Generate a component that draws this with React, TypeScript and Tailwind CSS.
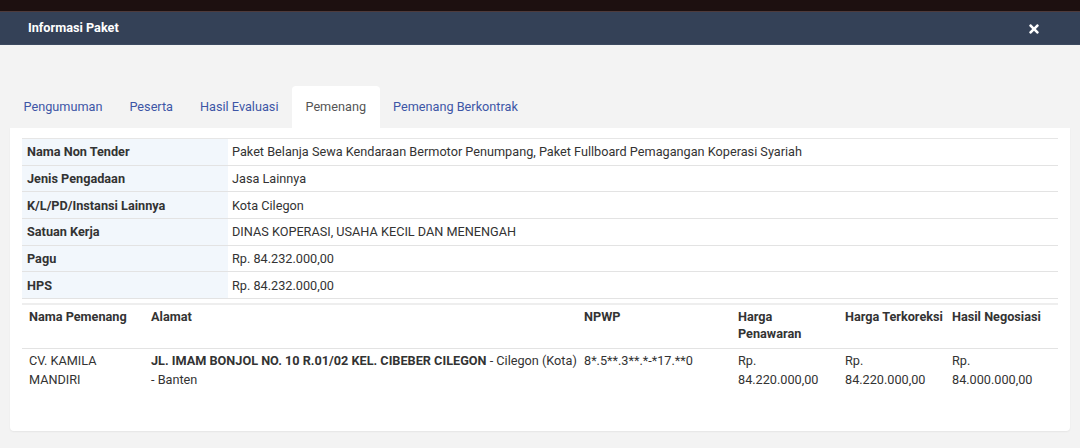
import React from "react";
import { FaTimes } from "react-icons/fa";

const info: [string, string][] = [
  ["Nama Non Tender", "Paket Belanja Sewa Kendaraan Bermotor Penumpang, Paket Fullboard Pemagangan Koperasi Syariah"],
  ["Jenis Pengadaan", "Jasa Lainnya"],
  ["K/L/PD/Instansi Lainnya", "Kota Cilegon"],
  ["Satuan Kerja", "DINAS KOPERASI, USAHA KECIL DAN MENENGAH"],
  ["Pagu", "Rp. 84.232.000,00"],
  ["HPS", "Rp. 84.232.000,00"],
];

const tabs = ["Pengumuman", "Peserta", "Hasil Evaluasi", "Pemenang", "Pemenang Berkontrak"];

export default function App() {
  return (
    <div
      className="w-[1080px] h-[448px] overflow-hidden bg-[#f3f3f3] text-[12.7px] text-[#333]"
      style={{ fontFamily: "Roboto, 'Liberation Sans', sans-serif" }}
    >
      <div className="h-[11px] bg-[#1d1010]" />
      <div className="h-px bg-[#4e3b3c]" />
      <div className="h-[33px] bg-[#344157] flex items-center justify-between pl-[28px] pr-[39px] border-b border-[#3c4a60]">
        <span className="text-white font-bold">Informasi Paket</span>
        <FaTimes className="text-white w-[14px] h-[14px] mt-[1px]" />
      </div>

      <div className="pt-[41px] px-[10px]">
        <div className="flex h-[42px] items-stretch">
          {tabs.map((t) => {
            const active = t === "Pemenang";
            return (
              <div
                key={t}
                className={
                  active
                    ? "px-[13.5px] flex items-center bg-white rounded-t-[4px] text-[#555]"
                    : "px-[13.5px] flex items-center text-[#3d56a6]"
                }
              >
                {t}
              </div>
            );
          })}
        </div>

        <div className="bg-white rounded-b-[4px] shadow-[0_1px_2px_rgba(0,0,0,0.06)] px-[12px] pt-[10px] pb-[12px] w-[1060px]">
          <div className="border-t border-[#e6e6e6]">
            {info.map(([k, v]) => (
              <div key={k} className="flex h-[26.7px] border-b border-[#e3e3e3]">
                <div className="w-[206px] bg-[#f2f7fc] font-bold pl-[5px] flex items-center">{k}</div>
                <div className="flex-1 pl-[4px] flex items-center">{v}</div>
              </div>
            ))}
          </div>

          <div className="mt-[4px] border-t-2 border-[#eeeeee]">
            <div className="grid grid-cols-[122px_433px_154px_107px_107px_113px] border-b border-[#e3e3e3] font-bold leading-[17px] pt-[3px] pb-[6px]">
              <div className="pl-[7px]">Nama Pemenang</div>
              <div className="pl-[7px]">Alamat</div>
              <div className="pl-[7px]">NPWP</div>
              <div className="pl-[7px] pr-[2px]">Harga Penawaran</div>
              <div className="pl-[7px] whitespace-nowrap">Harga Terkoreksi</div>
              <div className="pl-[7px] whitespace-nowrap">Hasil Negosiasi</div>
            </div>
            <div className="grid grid-cols-[122px_433px_154px_107px_107px_113px] leading-[19px] pt-[2px] h-[70px]">
              <div className="pl-[7px] pr-[4px]">CV. KAMILA MANDIRI</div>
              <div className="pl-[7px] pr-0">
                <span className="font-bold">JL. IMAM BONJOL NO. 10 R.01/02 KEL. CIBEBER CILEGON</span> - Cilegon (Kota) - Banten
              </div>
              <div className="pl-[7px]">8*.5**.3**.*-*17.**0</div>
              <div className="pl-[7px] pr-[2px]">Rp. 84.220.000,00</div>
              <div className="pl-[7px] pr-[2px]">Rp. 84.220.000,00</div>
              <div className="pl-[7px] pr-[12px]">Rp. 84.000.000,00</div>
            </div>
          </div>
        </div>
      </div>
    </div>
  );
}
